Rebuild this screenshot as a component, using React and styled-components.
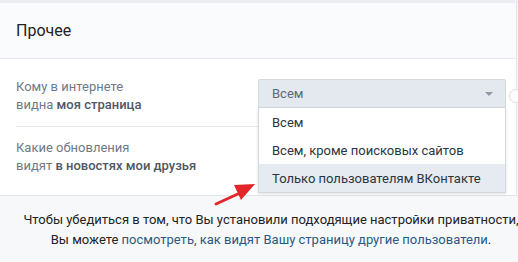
import styled, { createGlobalStyle } from "styled-components";

const Global = createGlobalStyle`
  html, body {
    margin: 0;
    padding: 0;
    background: #f7f8fa;
    overflow: hidden;
  }
  body {
    font-family: Roboto, "Open Sans", sans-serif;
    font-size: 13px;
    -webkit-font-smoothing: antialiased;
  }
`;

const Page = styled.div`
  position: relative;
  width: 518px;
  height: 262px;
  padding-top: 3px;
  box-sizing: border-box;
  background: #f7f8fa;
  border-top: 3px solid #eceef1;
  padding-top: 0;
`;

const Card = styled.div`
  position: relative;
  width: 516px;
  background: #fff;
  border-right: 1px solid #e3e5e8;
  border-bottom: 1px solid #e3e5e8;
`;

const Header = styled.div`
  height: 55px;
  display: flex;
  align-items: center;
  padding-left: 16px;
  font-size: 16px;
  color: #222;
  background: #fafbfc;
  border-bottom: 1px solid #e7e8ec;
`;

const Body = styled.div`
  padding: 7px 10px 8px 16px;
`;

const Row = styled.div`
  display: flex;
  padding: 12px 0;
  border-bottom: ${(p) => (p.last ? "none" : "1px solid #e7e8ec")};
`;

const Label = styled.div`
  width: 242px;
  line-height: 18px;
  color: #6f7985;
  & b {
    font-weight: 500;
    color: #4f5863;
  }
`;

const SelectWrap = styled.div`
  position: relative;
  width: 248px;
  margin-top: 1px;
`;

const Select = styled.div`
  height: 27px;
  display: flex;
  align-items: center;
  justify-content: space-between;
  padding: 0 12px 0 13px;
  background: #e4e9ef;
  border: 1px solid #d3d9de;
  border-radius: 2px 2px 0 0;
  color: #5e6875;
`;

const Caret = styled.span`
  width: 0;
  height: 0;
  border-left: 4px solid transparent;
  border-right: 4px solid transparent;
  border-top: 4px solid #8f9aa6;
`;

const Menu = styled.div`
  position: absolute;
  top: 29px;
  left: 0;
  width: 248px;
  box-sizing: border-box;
  background: #fff;
  border: 1px solid #d3d9de;
  border-top: none;
  box-shadow: 0 1px 3px rgba(0, 0, 0, 0.12);
  z-index: 2;
`;

const Item = styled.div`
  height: 28px;
  display: flex;
  align-items: center;
  padding-left: 13px;
  color: #2b3540;
  background: ${(p) => (p.active ? "#e5ebf1" : "#fff")};
`;

const Footer = styled.div`
  width: 542px;
  padding-top: 14px;
  text-align: center;
  line-height: 20px;
  color: #222;
  white-space: nowrap;
  & a {
    color: #2a5885;
    text-decoration: none;
  }
`;

const Arrow = styled.svg`
  position: absolute;
  left: 210px;
  top: 170px;
  z-index: 3;
`;

const EdgeTip = styled.div`
  position: absolute;
  right: -7px;
  top: 86px;
  width: 12px;
  height: 12px;
  border-radius: 50%;
  border: 1px solid #d7dce2;
  background: #fff;
`;

export default function App() {
  return (
    <>
      <Global />
      <Page>
        <Card>
          <Header>Прочее</Header>
          <Body>
            <Row>
              <Label>
                Кому в интернете
                <br />
                видна <b>моя страница</b>
              </Label>
              <SelectWrap>
                <Select>
                  Всем
                  <Caret />
                </Select>
                <Menu>
                  <Item>Всем</Item>
                  <Item>Всем, кроме поисковых сайтов</Item>
                  <Item active>Только пользователям ВКонтакте</Item>
                </Menu>
              </SelectWrap>
            </Row>
            <Row last>
              <Label>
                Какие обновления
                <br />
                видят <b>в новостях мои друзья</b>
              </Label>
            </Row>
          </Body>
          <EdgeTip />
        </Card>
        <Footer>
          Чтобы убедиться в том, что Вы установили подходящие настройки приватности,
          <br />
          Вы можете <a href="#">посмотреть, как видят Вашу страницу другие пользователи</a>.
        </Footer>
        <Arrow width="50" height="40" viewBox="0 0 50 40">
          <line x1="6" y1="31" x2="30" y2="20" stroke="#e3262a" strokeWidth="3" strokeLinecap="round" />
          <polygon points="45,11 24,12 31,27" fill="#e3262a" />
        </Arrow>
      </Page>
    </>
  );
}
